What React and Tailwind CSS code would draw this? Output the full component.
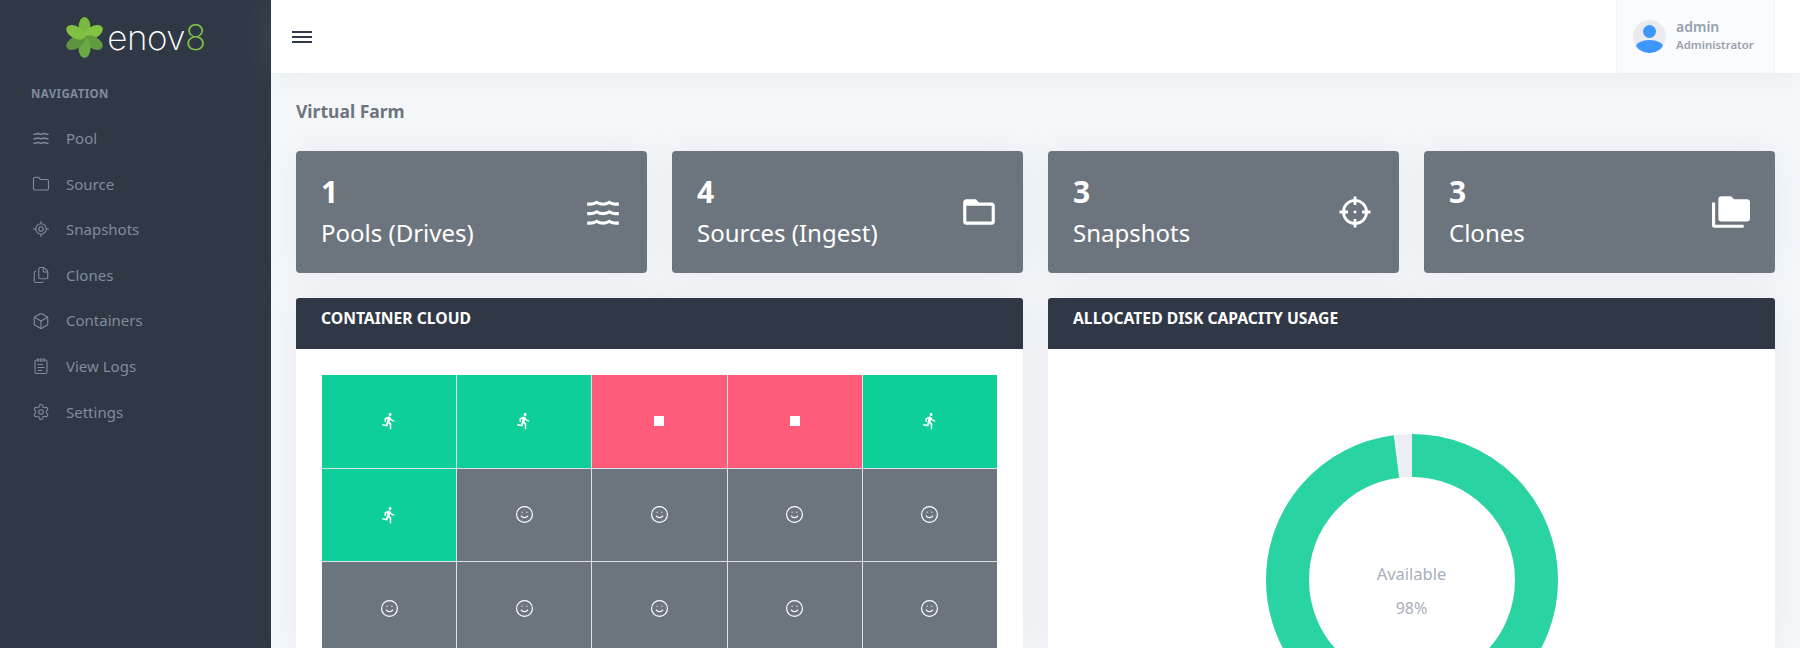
import { Folder, LocateFixed, Files, Box, NotepadText, Settings, Smile } from "lucide-react";
import { MdDirectionsRun } from "react-icons/md";

const font = { fontFamily: '"Noto Sans", sans-serif' };

const wavesPath =
  "M20,12H22V14H20C18.62,14 17.26,13.65 16,13C13.5,14.3 10.5,14.3 8,13C6.74,13.65 5.37,14 4,14H2V12H4C5.39,12 6.78,11.53 8,10.67C10.44,12.38 13.56,12.38 16,10.67C17.22,11.53 18.61,12 20,12M20,6H22V8H20C18.62,8 17.26,7.65 16,7C13.5,8.3 10.5,8.3 8,7C6.74,7.65 5.37,8 4,8H2V6H4C5.39,6 6.78,5.53 8,4.67C10.44,6.38 13.56,6.38 16,4.67C17.22,5.53 18.61,6 20,6M20,18H22V20H20C18.62,20 17.26,19.65 16,19C13.5,20.3 10.5,20.3 8,19C6.74,19.65 5.37,20 4,20H2V18H4C5.39,18 6.78,17.53 8,16.67C10.44,18.38 13.56,18.38 16,16.67C17.22,17.53 18.61,18 20,18Z";

function Waves({ className }) {
  return (
    <svg viewBox="0 0 24 24" className={className} fill="currentColor">
      <path d={wavesPath} />
    </svg>
  );
}

function FolderOutline({ className }) {
  return (
    <svg viewBox="0 0 24 24" className={className} fill="currentColor">
      <path d="M20,18H4V8H20M20,6H12L10,4H4C2.89,4 2,4.89 2,6V18A2,2 0 0,0 4,20H20A2,2 0 0,0 22,18V8C22,6.89 21.1,6 20,6Z" />
    </svg>
  );
}

function Crosshairs({ className }) {
  return (
    <svg viewBox="-1.5 -1.5 27 27" className={className} fill="none" stroke="currentColor" strokeWidth="2">
      <circle cx="12" cy="12" r="8.2" />
      <path d="M12 1v6M12 17v6M1 12h6M17 12h6" />
      <circle cx="12" cy="12" r="1" fill="currentColor" stroke="none" />
    </svg>
  );
}

function FolderMultiple({ className }) {
  return (
    <svg viewBox="0 0 24 24" className={className} fill="currentColor">
      <path d="M22,4H14L12,2H6A2,2 0 0,0 4,4V16A2,2 0 0,0 6,18H22A2,2 0 0,0 24,16V6A2,2 0 0,0 22,4M2,6H0V20A2,2 0 0,0 2,22H20V20H2V6Z" />
    </svg>
  );
}

function Logo() {
  const petals = [
    { angle: 0, fill: "#78b83f" },
    { angle: 60, fill: "#82c441" },
    { angle: 120, fill: "#629c3f" },
    { angle: 180, fill: "#6aa945" },
    { angle: 240, fill: "#5c9440" },
    { angle: 300, fill: "#7fc043" },
  ];
  return (
    <div className="flex h-[73px] items-center justify-center">
      <svg viewBox="0 0 40 44" className="mt-[2px] h-[43px] w-[39px]">
        {petals.map((p) => (
          <ellipse
            key={p.angle}
            cx="20"
            cy="11.5"
            rx="6.2"
            ry="10.5"
            fill={p.fill}
            transform={`rotate(${p.angle} 20 22)`}
          />
        ))}
      </svg>
      <span
        className="ml-[3px] mt-[2px] text-[35px] font-extralight leading-none tracking-[-0.5px] text-white"
        style={{ fontFamily: "Inter, sans-serif" }}
      >
        enov<span className="text-[#84c441]">8</span>
      </span>
    </div>
  );
}

const navItems = [
  { label: "Pool", icon: Waves },
  { label: "Source", icon: Folder },
  { label: "Snapshots", icon: LocateFixed },
  { label: "Clones", icon: Files },
  { label: "Containers", icon: Box },
  { label: "View Logs", icon: NotepadText },
  { label: "Settings", icon: Settings },
];

const stats = [
  { value: "1", label: "Pools (Drives)", icon: Waves },
  { value: "4", label: "Sources (Ingest)", icon: FolderOutline },
  { value: "3", label: "Snapshots", icon: Crosshairs },
  { value: "3", label: "Clones", icon: FolderMultiple },
];

const containers = [
  "run", "run", "stop", "stop", "run",
  "run", "idle", "idle", "idle", "idle",
  "idle", "idle", "idle", "idle", "idle",
];

function ContainerCell({ state }) {
  if (state === "run") {
    return (
      <div className="flex h-[92.5px] items-center justify-center bg-[#0dcf97] text-white">
        <MdDirectionsRun className="h-[18px] w-[18px]" />
      </div>
    );
  }
  if (state === "stop") {
    return (
      <div className="flex h-[92.5px] items-center justify-center bg-[#ff5c7c]">
        <div className="h-[10px] w-[10px] bg-white" />
      </div>
    );
  }
  return (
    <div className="flex h-[92.5px] items-center justify-center bg-[#6c757d] text-white">
      <Smile className="h-[19px] w-[19px]" strokeWidth={1.5} />
    </div>
  );
}

function Panel({ title, children }) {
  return (
    <section className="col-span-2 h-[350px] overflow-hidden rounded-t-[3px] bg-white shadow-[0_0_35px_rgba(154,161,171,0.15)]">
      <h2 className="flex h-[51px] items-start bg-[#303846] px-[25px] pt-[9px] text-[15.7px] font-bold uppercase text-white">
        {title}
      </h2>
      {children}
    </section>
  );
}

export default function App() {
  return (
    <div className="flex h-[648px] overflow-hidden bg-[#f6f7fb]" style={font}>
      {/* Sidebar */}
      <aside className="w-[271px] shrink-0 bg-[#303846]">
        <Logo />
        <div className="pl-[31px] pt-[13px] text-[11.5px] font-bold uppercase leading-4 tracking-[0.4px] text-[#808b9c]">
          Navigation
        </div>
        <nav className="mt-[13.5px] flex flex-col">
          {navItems.map((item) => (
            <a key={item.label} className="flex h-[45.6px] items-center pl-[32px] text-[15px] text-[#808b9c]">
              <item.icon className="h-[18px] w-[18px]" strokeWidth={1.5} />
              <span className="ml-[16px]">{item.label}</span>
            </a>
          ))}
        </nav>
      </aside>

      <div className="flex min-w-0 flex-1 flex-col">
        {/* Topbar */}
        <header className="relative flex h-[73px] shrink-0 items-center justify-between bg-white pl-[21px] pr-[25px] shadow-[0_0_35px_rgba(154,161,171,0.15)]">
          <svg viewBox="0 0 20 14" className="h-[14px] w-[20px] text-[#323a49]" stroke="currentColor" strokeWidth="2">
            <path d="M0 2h20M0 7h20M0 12h20" />
          </svg>
          <div className="flex h-full w-[159px] items-center border-x border-[#f1f3fa] bg-[#fafbfe] pl-[16px]">
            <div className="relative h-[33px] w-[33px] overflow-hidden rounded-full bg-[#e9ebef]">
              <div className="absolute left-[10px] top-[5px] h-[13px] w-[13px] rounded-full bg-[#3e96ff]" />
              <div className="absolute left-[3px] top-[20px] h-[13px] w-[27px] rounded-[50%] bg-[#3e96ff]" />
            </div>
            <div className="ml-[10px] mb-[4px]">
              <div className="text-[14px] font-semibold leading-[19px] text-[#98a0ad]">admin</div>
              <div className="text-[11.4px] font-semibold leading-[17px] text-[#98a0ad]">Administrator</div>
            </div>
          </div>
        </header>

        {/* Content */}
        <main className="px-[25px]">
          <h1 className="flex h-[78px] items-center pb-[2px] text-[17.5px] font-bold text-[#6c757d]">Virtual Farm</h1>

          <div className="grid grid-cols-4 gap-[25px]">
            {stats.map((stat) => (
              <div
                key={stat.label}
                className="flex h-[122px] items-center justify-between rounded-[4px] bg-[#6c757d] pl-[25px] pr-[25px] text-white shadow-[0_0_35px_rgba(154,161,171,0.15)]"
              >
                <div className="pt-[4px]">
                  <div className="text-[30px] font-bold leading-[38px]">{stat.value}</div>
                  <div className="text-[24px] leading-[44px]">{stat.label}</div>
                </div>
                <stat.icon className="h-[38px] w-[38px]" />
              </div>
            ))}
          </div>

          <div className="mt-[25px] grid grid-cols-4 gap-[25px]">
            <Panel title="Container Cloud">
              <div className="mx-[26px] mt-[26px] grid grid-cols-5 gap-px bg-[#dfe1e4]">
                {containers.map((state, i) => (
                  <ContainerCell key={i} state={state} />
                ))}
              </div>
            </Panel>

            <Panel title="Allocated Disk Capacity Usage">
              <div className="relative mx-auto mt-[85px] h-[292px] w-[292px]">
                <svg viewBox="0 0 292 292" className="h-full w-full -rotate-90">
                  <circle cx="146" cy="146" r="124.5" fill="none" stroke="#ebeef2" strokeWidth="43" />
                  <circle
                    cx="146"
                    cy="146"
                    r="124.5"
                    fill="none"
                    stroke="#2ad3a2"
                    strokeWidth="43"
                    pathLength="100"
                    strokeDasharray="98 2"
                  />
                </svg>
                <div className="absolute inset-x-0 top-[128px] text-center text-[16.5px] text-[#a8aebb]">Available</div>
                <div className="absolute inset-x-0 top-[162px] text-center text-[16px] text-[#a8aebb]">98%</div>
              </div>
            </Panel>
          </div>
        </main>
      </div>
    </div>
  );
}
